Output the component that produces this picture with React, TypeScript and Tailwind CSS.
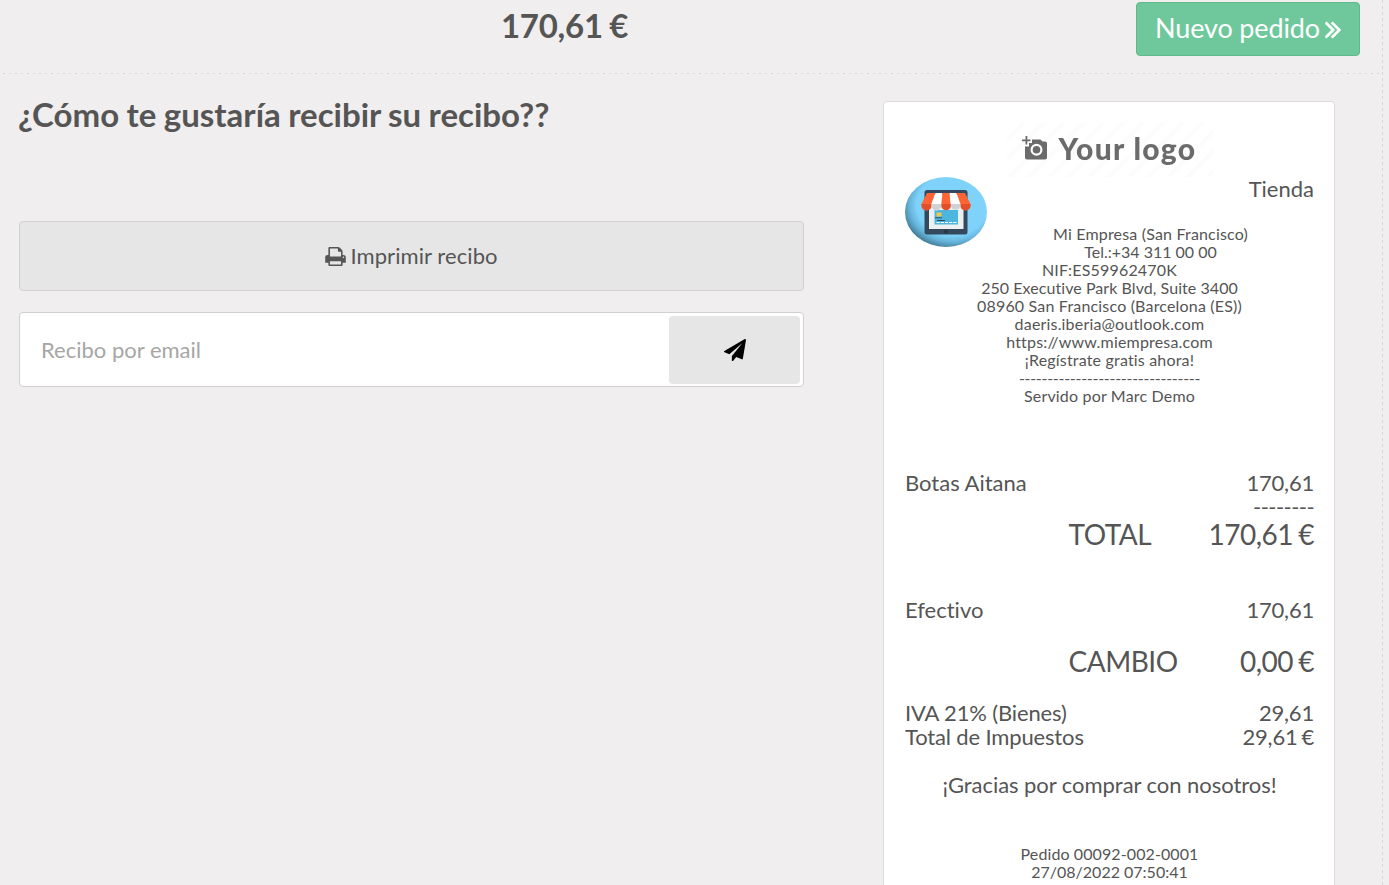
import React from "react";

type IconProps = { d: string; viewBox: string; className: string };

const Icon = ({ d, viewBox, className }: IconProps) => (
  <svg viewBox={viewBox} className={className} fill="currentColor" aria-hidden="true">
    <path d={d} />
  </svg>
);

const PRINT =
  "M448 1536h896v-256h-896v256zm0-640h896v-384h-160q-40 0-68-28t-28-68v-160h-640v640zm1152 64q0-26-19-45t-45-19-45 19-19 45 19 45 45 19 45-19 19-45zm128 0v416q0 13-9.5 22.5t-22.5 9.5h-224v160q0 40-28 68t-68 28h-960q-40 0-68-28t-28-68v-160h-224q-13 0-22.5-9.5t-9.5-22.5v-416q0-79 56.5-135.5t135.5-56.5h64v-544q0-40 28-68t68-28h672q40 0 88 20t76 48l152 152q28 28 48 76t20 88v256h64q79 0 135.5 56.5t56.5 135.5z";
const PLANE =
  "M1764 11q33 24 27 64l-256 1536q-5 29-32 45-14 8-31 8-11 0-24-5l-453-185-242 295q-18 23-49 23-13 0-22-4-19-7-30.5-23.5t-11.5-36.5v-349l864-1059-1069 925-395-162q-37-14-40-55-2-40 32-59l1664-960q15-9 32-9 20 0 36 11z";
const ANGLES =
  "M979 960q0 13-10 23l-466 466q-10 10-23 10t-23-10l-50-50q-10-10-10-23t10-23l393-393-393-393q-10-10-10-23t10-23l50-50q10-10 23-10t23 10l466 466q10 10 10 23zm384 0q0 13-10 23l-466 466q-10 10-23 10t-23-10l-50-50q-10-10-10-23t10-23l393-393-393-393q-10-10-10-23t10-23l50-50q10-10 23-10t23 10l466 466q10 10 10 23z";

const StoreBadge = () => (
  <svg viewBox="0 0 82 70" className="h-[70px] w-[82px]" aria-hidden="true">
    <defs>
      <radialGradient id="disc" cx="0.58" cy="0.4" r="0.62">
        <stop offset="0.7" stopColor="#7fd3fb" />
        <stop offset="0.85" stopColor="#66b4da" />
        <stop offset="1" stopColor="#457f9c" />
      </radialGradient>
    </defs>
    <ellipse cx="41" cy="35" rx="41" ry="35" fill="url(#disc)" />
    <rect x="19.5" y="13" width="43" height="44.5" rx="2.5" fill="#34495e" />
    <rect x="24" y="18" width="34.500" height="34" fill="#ecf0f1" />
    <rect x="29.500" y="33" width="23.500" height="14.500" fill="#4db6df" />
    <rect x="31.500" y="35.500" width="5" height="4" rx="1" fill="#f2c94c" />
    <path d="M30 40.800h7M32 43.500h8" stroke="#34495e" strokeWidth="1" />
    <path d="M31.500 45.500h20" stroke="#fff" strokeWidth="1.200" strokeDasharray="3.200 1" />
    <path d="M22 16h8.500L26.500 27v1.500a5 5 0 0 1-10 0V27z" fill="#ff6534" />
    <path d="M30.500 16h7L36.300 27v1.500a4.900 4.900 0 0 1-9.800 0V27z" fill="#ffffff" />
    <path d="M37.500 16h7L45.800 27v1.500a4.700 4.700 0 0 1-9.500 0V27z" fill="#ff6534" />
    <path d="M44.500 16h7L55.500 27v1.500a4.900 4.900 0 0 1-9.700 0V27z" fill="#ffffff" />
    <path d="M51.500 16h8.500L65.500 27v1.500a5 5 0 0 1-10 0V27z" fill="#ff6534" />
    <path d="M16.500 27h10v1.500a5 5 0 0 1-10 0zM36.300 27h9.500v1.500a4.700 4.700 0 0 1-9.500 0zM55.500 27h10v1.500a5 5 0 0 1-10 0z" fill="#e2502a" />
    <path d="M26.500 27h9.800v1.500a4.900 4.900 0 0 1-9.800 0zM45.800 27h9.700v1.500a4.900 4.900 0 0 1-9.700 0z" fill="#d0d3d6" />
    <circle cx="41" cy="54.500" r="2" fill="#273746" />
  </svg>
);

const Camera = () => (
  <svg viewBox="0 0 26 24" className="h-[24px] w-[26px]" fill="#6b6b6b" aria-hidden="true">
    <path d="M3.500 0h1.800v3.500H8.500v1.800H5.300V8.500H3.500V5.300H0V3.500h3.500z" />
    <path
      fillRule="evenodd"
      d="M10 3.500h8.500l2 2H23a2 2 0 0 1 2 2v14a2 2 0 0 1-2 2H5a2 2 0 0 1-2-2V10.500h4V7h3zM14.500 7.800a6 6 0 1 0 0 12 6 6 0 0 0 0-12zm0 2.200a3.800 3.800 0 1 1 0 7.600 3.800 3.800 0 0 1 0-7.600z"
    />
  </svg>
);

const Row = ({ label, value }: { label: string; value: string }) => (
  <div className="flex justify-between">
    <span>{label}</span>
    <span className="tracking-[-0.2px] [word-spacing:-1.500px]">{value}</span>
  </div>
);

const TotalRow = ({ label, value }: { label: string; value: string }) => (
  <div className="flex justify-between pl-[163.600px] text-[28px] leading-[30px] tracking-[-0.5px] [word-spacing:-1.500px]">
    <span>{label}</span>
    <span>{value}</span>
  </div>
);

const Receipt = () => (
  <section className="ml-[79px] mt-[7px] h-[900px] w-[452px] shrink-0 rounded-[4px] border border-[#dcdcdc] bg-white pl-[21px] pr-[20px] pt-[21px] text-[22px] leading-[24px]">
    <div className="mx-auto flex h-[54px] w-[206px] items-center bg-[repeating-linear-gradient(135deg,#fff_0px,#fff_10px,#fcfcfc_10px,#fcfcfc_14px)] pb-[4px] pl-[15px] blur-[0.4px]">
      <Camera />
      <span className="ml-[11px] whitespace-nowrap text-[30px] font-black leading-[36px] tracking-[1.300px] text-[#6b6b6b]">Your logo</span>
    </div>
    <div className="flex h-[48px] justify-between">
      <StoreBadge />
      <span>Tienda</span>
    </div>
    <div className="text-center text-[16px] leading-[18px] tracking-[0.180px]">
      <div className="pl-[82px]">Mi Empresa (San Francisco)</div>
      <div className="pl-[82px] tracking-normal">Tel.:+34 311 00 00</div>
      <div>NIF:ES59962470K</div>
      <div className="tracking-[0.060px]">250 Executive Park Blvd, Suite 3400</div>
      <div>08960 San Francisco (Barcelona (ES))</div>
      <div>daeris.iberia@outlook.com</div>
      <div>https://www.miempresa.com</div>
      <div>¡Regístrate gratis ahora!</div>
      <div className="tracking-[-0.280px]">--------------------------------</div>
      <div>Servido por Marc Demo</div>
    </div>
    <div className="mt-[66px]">
      <Row label="Botas Aitana" value="170,61" />
      <div className="text-right tracking-[-0.550px]">--------</div>
      <TotalRow label="TOTAL" value="170,61 €" />
    </div>
    <div className="mt-[49px]">
      <Row label="Efectivo" value="170,61" />
      <div className="mt-6">
        <TotalRow label="CAMBIO" value="0,00 €" />
      </div>
    </div>
    <div className="mt-[25px] tracking-[-0.150px]">
      <Row label="IVA 21% (Bienes)" value="29,61" />
      <Row label="Total de Impuestos" value="29,61 €" />
    </div>
    <div className="mt-6 text-center tracking-[-0.050px]">¡Gracias por comprar con nosotros!</div>
    <div className="mt-[48px] text-center text-[16px] leading-[18px]">
      <div className="tracking-[0.100px]">Pedido 00092-002-0001</div>
      <div>27/08/2022 07:50:41</div>
    </div>
  </section>
);

export default function App() {
  return (
    <div className="flex h-[885px] w-[1389px] overflow-hidden bg-[#f0eeee] font-['Lato',sans-serif] text-[#555555] [font-variant-ligatures:none]">
      <div className="w-[1382px] shrink-0">
        <header className="flex h-[73px] pl-[19px]">
          <div className="w-[1091px] pt-[7px] text-center text-[33px] font-bold leading-[36px] tracking-[-0.250px] [word-spacing:-1.500px]">
            170,61 €
          </div>
          <button className="ml-[26px] mt-[2px] flex h-[54px] w-[224px] items-center justify-center rounded-[4px] border border-[#5fb98a] bg-[#6ec89b] pb-[2px] text-[27px] tracking-[-0.150px] text-white">
            Nuevo pedido
            <Icon d={ANGLES} viewBox="387 401 996 1118" className="ml-[5px] mt-[3px] h-[18px] w-[16px] stroke-current [stroke-width:50]" />
          </button>
        </header>
        <div className="ml-[3px] h-px bg-[repeating-linear-gradient(90deg,#d8d6d6_0px,#d8d6d6_2px,transparent_2px,transparent_6px)]" />
        <main className="flex pl-[19px] pt-[20px]">
          <section className="w-[785px] shrink-0">
            <h1 className="ml-[-1px] text-[33px] font-bold leading-[40px] [word-spacing:-0.600px]">¿Cómo te gustaría recibir su recibo??</h1>
            <button className="mt-[87px] flex h-[70px] w-full items-center justify-center rounded-[4px] border border-[#d0d0d0] bg-[#e6e6e6] pb-[2px] text-[22px] tracking-[0.080px]">
              <Icon d={PRINT} viewBox="64 128 1664 1536" className="mr-[4px] mt-[2px] h-[19px] w-[21px]" />
              Imprimir recibo
            </button>
            <div className="mt-[21px] flex h-[75px] rounded-[4px] border border-[#d0d0d0] bg-white p-[3px]">
              <input
                className="min-w-0 flex-1 bg-transparent pl-[18px] text-[22px] outline-none placeholder:text-[#a6a6a6]"
                placeholder="Recibo por email"
              />
              <button className="flex h-[68px] w-[131px] items-center justify-center rounded-[4px] bg-[#e6e6e6] text-black" aria-label="Enviar">
                <Icon d={PLANE} viewBox="0 0 1792 1792" className="size-[22px]" />
              </button>
            </div>
          </section>
          <Receipt />
        </main>
      </div>
      <div className="w-px shrink-0 bg-[repeating-linear-gradient(180deg,#d8d6d6_0px,#d8d6d6_3px,transparent_3px,transparent_6px)]" />
    </div>
  );
}
